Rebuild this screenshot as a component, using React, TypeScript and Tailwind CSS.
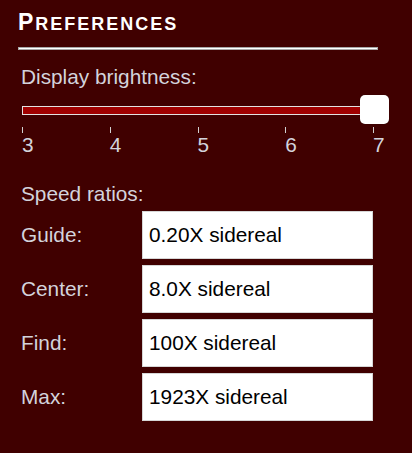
import React, { useState } from 'react';

interface SpeedRow {
  label: string;
  value: string;
}

const speeds: SpeedRow[] = [
  { label: 'Guide:', value: '0.20X sidereal' },
  { label: 'Center:', value: '8.0X sidereal' },
  { label: 'Find:', value: '100X sidereal' },
  { label: 'Max:', value: '1923X sidereal' },
];

const marks = [3, 4, 5, 6, 7];

/**
 * Brightness slider, drawn by hand so the ticks sit under the track
 */
function BrightnessSlider({ value }: { value: number }) {
  // track runs 0..352px from min to max
  const pct = (value - 3) / 4;
  const thumbLeft = Math.round(pct * 352) - 14;

  return (
    <div className="ml-[1px]">
      <div className="relative mt-[6px] h-[29px] w-[368px]">
        <div className="absolute left-0 top-[11px] h-[9px] w-[366px] border border-[#e2e2e2] bg-[#a00000]" />
        <div
          className="absolute top-0 h-[29px] w-[29px] rounded-[5px] bg-white shadow-[0_0_1px_rgba(0,0,0,0.6)]"
          style={{ left: thumbLeft }}
        />
      </div>

      {/* Tick marks with their numbers */}
      <div className="mt-[3px] flex w-[352px] justify-between">
        {marks.map((m) => (
          <div key={m} className="flex w-px flex-col">
            <div className="h-[6px] w-px bg-[#d0d0d0]" />
            <span className="whitespace-nowrap text-[20.8px] leading-[24px] text-[#d3d3dc]">{m}</span>
          </div>
        ))}
      </div>
    </div>
  );
}

export default function App() {
  const [brightness] = useState(7);

  return (
    <div className="h-[453px] w-full bg-[#400000] px-[18px] pt-[9px] font-['Liberation_Sans',Arial,sans-serif]">
      <h2 className="text-[23px] font-bold leading-[26px] tracking-[2px] text-white">
        <span>P</span>
        <span className="text-[18px] uppercase">references</span>
      </h2>
      <div className="mt-[10px] h-[3px] w-[360px] border border-[#a8a8a8] bg-white" />

      <div className="pl-[3px]">
        <div className="mt-[15px] text-[20.8px] leading-[24px] text-[#d3d3dc]">Display brightness:</div>

        <BrightnessSlider value={brightness} />

        <div className="mt-[25px] text-[20.8px] leading-[24px] text-[#d3d3dc]">Speed ratios:</div>

        <div className="mt-[5px] flex flex-col gap-[6px]">
          {speeds.map((s) => (
            <div key={s.label} className="flex h-[48px] items-center">
              <span className="w-[121px] text-[20.8px] leading-[24px] text-[#d3d3dc]">{s.label}</span>
              <div className="flex h-[48px] w-[231px] items-center border border-[#d6d6d6] bg-white pl-[6px] text-[20.8px] leading-[24px] text-black">
                {s.value}
              </div>
            </div>
          ))}
        </div>
      </div>
    </div>
  );
}
